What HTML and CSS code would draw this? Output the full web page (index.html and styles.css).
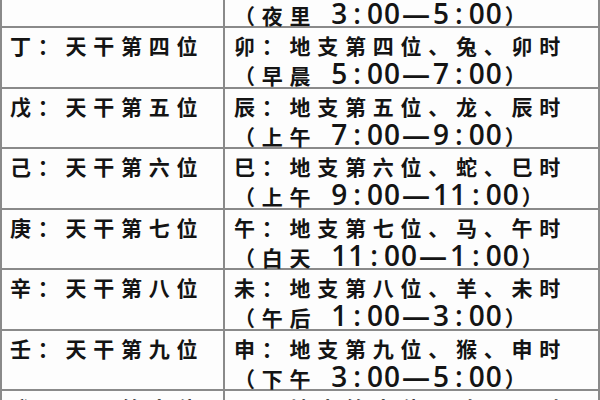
FILE: index.html
```html
<!DOCTYPE html>
<html lang="zh-CN">
<head>
<meta charset="utf-8">
<link rel="stylesheet" href="styles.css">
</head>
<body>
<div class="table">
  <div class="row">
    <div class="cell gan">丙：天干第三位</div>
    <div class="cell zhi"><div>寅：地支第三位、虎、寅时</div><div>（夜里<span class="t">3<span class="c">:</span>00<span class="d">—</span>5<span class="c">:</span>00</span>）</div></div>
  </div>
  <div class="row">
    <div class="cell gan">丁：天干第四位</div>
    <div class="cell zhi"><div>卯：地支第四位、兔、卯时</div><div>（早晨<span class="t">5<span class="c">:</span>00<span class="d">—</span>7<span class="c">:</span>00</span>）</div></div>
  </div>
  <div class="row">
    <div class="cell gan">戊：天干第五位</div>
    <div class="cell zhi"><div>辰：地支第五位、龙、辰时</div><div>（上午<span class="t">7<span class="c">:</span>00<span class="d">—</span>9<span class="c">:</span>00</span>）</div></div>
  </div>
  <div class="row">
    <div class="cell gan">己：天干第六位</div>
    <div class="cell zhi"><div>巳：地支第六位、蛇、巳时</div><div>（上午<span class="t">9<span class="c">:</span>00<span class="d">—</span>11<span class="c">:</span>00</span>）</div></div>
  </div>
  <div class="row">
    <div class="cell gan">庚：天干第七位</div>
    <div class="cell zhi"><div>午：地支第七位、马、午时</div><div>（白天<span class="t">11<span class="c">:</span>00<span class="d">—</span>1<span class="c">:</span>00</span>）</div></div>
  </div>
  <div class="row">
    <div class="cell gan">辛：天干第八位</div>
    <div class="cell zhi"><div>未：地支第八位、羊、未时</div><div>（午后<span class="t">1<span class="c">:</span>00<span class="d">—</span>3<span class="c">:</span>00</span>）</div></div>
  </div>
  <div class="row">
    <div class="cell gan">壬：天干第九位</div>
    <div class="cell zhi"><div>申：地支第九位、猴、申时</div><div>（下午<span class="t">3<span class="c">:</span>00<span class="d">—</span>5<span class="c">:</span>00</span>）</div></div>
  </div>
  <div class="row">
    <div class="cell gan">癸：天干第十位</div>
    <div class="cell zhi"><div>酉：地支第十位、鸡、酉时</div><div>（下午<span class="t">5<span class="c">:</span>00<span class="d">—</span>7<span class="c">:</span>00</span>）</div></div>
  </div>
</div>
</body>
</html>
```
FILE: styles.css
```css
html, body {
  margin: 0;
  padding: 0;
  background: #fdfdfd;
  width: 600px;
  height: 400px;
  overflow: hidden;
}
.table {
  margin-top: -32.5px;
  width: 600px;
  box-sizing: border-box;
  border-left: 2px solid #8a8a8a;
  border-right: 2px solid #8a8a8a;
  font-family: "Noto Sans CJK SC", sans-serif;
  font-weight: 700;
  font-size: 21px;
  letter-spacing: 6.75px;
  line-height: 28px;
  color: #141414;
}
.row {
  display: grid;
  grid-template-columns: 223px 1fr;
  height: 60.5px;
  box-sizing: border-box;
  border-bottom: 2px solid #8a8a8a;
}
.cell {
  padding-top: 3px;
  white-space: nowrap;
}
.gan {
  padding-left: 8px;
  border-right: 2px solid #8a8a8a;
}
.zhi {
  padding-left: 9px;
}
.t {
  font-family: "Open Sans", sans-serif;
  font-weight: 600;
  font-size: 28px;
  letter-spacing: 1px;
  margin-left: 14px;
  margin-right: 2px;
}
.c {
  margin: 0 5px;
}
.d {
  margin: 0 2px 0 1px;
}
```
